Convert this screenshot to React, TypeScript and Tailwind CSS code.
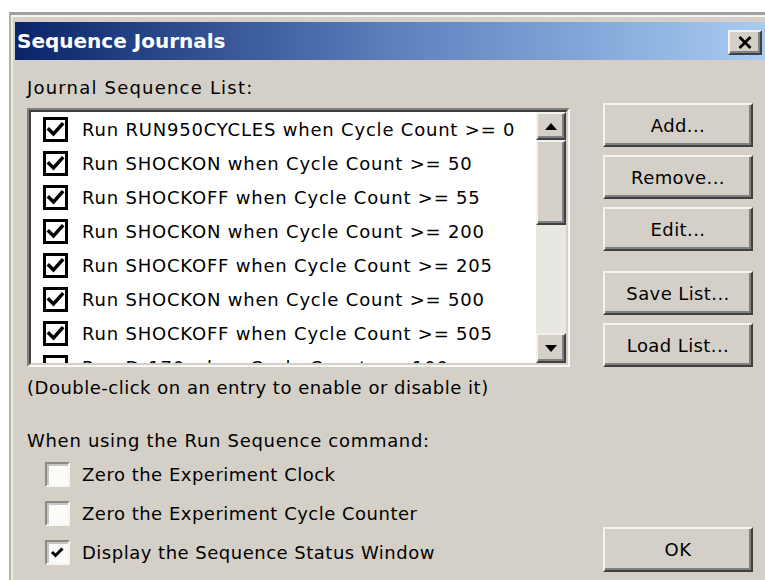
import { ReactNode } from "react"

const font = { fontFamily: '"DejaVu Sans", Verdana, sans-serif' }

const journals = [
  { name: "RUN950CYCLES", count: 0, on: true },
  { name: "SHOCKON", count: 50, on: true },
  { name: "SHOCKOFF", count: 55, on: true },
  { name: "SHOCKON", count: 200, on: true },
  { name: "SHOCKOFF", count: 205, on: true },
  { name: "SHOCKON", count: 500, on: true },
  { name: "SHOCKOFF", count: 505, on: true },
  { name: "Dr170", count: 100, on: false },
]

function ListCheck({ checked }: { checked: boolean }) {
  return (
    <svg width="25" height="25" viewBox="0 0 25 25" className="shrink-0">
      <rect x="1.5" y="1.5" width="22" height="22" fill="#fff" stroke="#000" strokeWidth="3" />
      {checked && (
        <path d="M6 12.5 L10.5 17 L19 7.5" fill="none" stroke="#000" strokeWidth="3.5" strokeLinecap="square" />
      )}
    </svg>
  )
}

function Raised({ className, children }: { className?: string; children?: ReactNode }) {
  return (
    <div
      className={`flex items-center justify-center bg-[#d4d0c8] border-2 border-t-[#f4f2ee] border-l-[#f4f2ee] border-b-[#404040] border-r-[#404040] shadow-[inset_-2px_-2px_0_#808080] ${className ?? ""}`}
    >
      {children}
    </div>
  )
}

function DialogButton({ label, tall }: { label: string; tall?: boolean }) {
  return (
    <Raised className={`${tall ? "h-[45px]" : "h-[44px]"} w-[150px] text-[18px] tracking-[0.4px] text-black`}>
      <span>{label}</span>
    </Raised>
  )
}

function OptionCheck({ label, checked }: { label: string; checked: boolean }) {
  return (
    <div className="flex h-[39px] items-center pl-[18px]">
      <div className="flex h-[25px] w-[25px] shrink-0 items-center justify-center border-2 border-t-[#8c8a86] border-l-[#8c8a86] border-b-[#f6f5f2] border-r-[#f6f5f2] bg-[#fbfbfa] shadow-[inset_2px_2px_0_#c8c6c2]">
        {checked && (
          <svg width="17" height="17" viewBox="0 0 17 17">
            <path d="M3 8 L6.5 11.5 L13.5 4.5" fill="none" stroke="#000" strokeWidth="3" />
          </svg>
        )}
      </div>
      <span className="ml-[12px]">{label}</span>
    </div>
  )
}

export default function App() {
  return (
    <div className="h-[580px] w-[765px] overflow-hidden bg-white pl-[9px] pt-[12px]" style={font}>
      <div className="h-full border-l-2 border-t-[3px] border-l-[#b4b0ac] border-t-[#a29ea2] bg-[#d4d0c8]">
        <div className="flex h-full flex-col border-l-2 border-t-2 border-l-[#eceae6] border-t-[#f6f5f3] pl-[2px] pt-[5px]">
          {/* caption */}
          <div className="flex h-[38px] shrink-0 items-center justify-between bg-gradient-to-r from-[#0a246a] via-[#5d7fbd] to-[#a8ccf2] pl-[2px]">
            <span className="text-[20px] font-bold text-white">Sequence Journals</span>
            <Raised className="mr-[3px] mt-[3px] h-[25px] w-[34px]">
              <svg width="14" height="13" viewBox="0 0 14 13">
                <path d="M1.5 1 L12.5 12 M12.5 1 L1.5 12" stroke="#000" strokeWidth="2.8" />
              </svg>
            </Raised>
          </div>

          {/* body */}
          <div className="flex flex-1 pb-[10px] pl-[12px] text-[18px] tracking-[0.5px] text-black">
            <div className="flex w-[543px] flex-col">
              <div className="mt-[17px] h-[22px] leading-[22px] tracking-[1.2px]">Journal Sequence List:</div>

              <div className="mt-[9px] h-[259px] border-2 border-t-[#808080] border-l-[#808080] border-b-[#f8f8f6] border-r-[#f8f8f6]">
                <div className="flex h-full border-2 border-t-[#404040] border-l-[#404040] border-b-[#d4d0c8] border-r-[#d4d0c8] bg-white">
                  <div className="flex-1 overflow-hidden">
                    {journals.map((j, i) => (
                      <div key={i} className="flex h-[34px] items-center pl-[12px] whitespace-nowrap tracking-[0.8px]">
                        <ListCheck checked={j.on} />
                        <span className="ml-[14px]">
                          Run {j.name} when Cycle Count &gt;= {j.count}
                        </span>
                      </div>
                    ))}
                  </div>

                  {/* vertical scroll bar */}
                  <div className="flex w-[30px] flex-col bg-[#e9e7e2]">
                    <Raised className="h-[28px] w-full">
                      <svg width="12" height="7" viewBox="0 0 12 7">
                        <path d="M6 0 L12 7 L0 7 Z" fill="#000" />
                      </svg>
                    </Raised>
                    <Raised className="h-[85px] w-full" />
                    <div className="flex-1" />
                    <Raised className="h-[30px] w-full">
                      <svg width="12" height="7" viewBox="0 0 12 7">
                        <path d="M0 0 L12 0 L6 7 Z" fill="#000" />
                      </svg>
                    </Raised>
                  </div>
                </div>
              </div>

              <div className="mt-[10px] h-[22px] leading-[22px]">
                (Double-click on an entry to enable or disable it)
              </div>
              <div className="mt-[31px] h-[22px] leading-[22px] tracking-[0.7px]">When using the Run Sequence command:</div>
              <div className="mt-[3px]">
                <OptionCheck label="Zero the Experiment Clock" checked={false} />
                <OptionCheck label="Zero the Experiment Cycle Counter" checked={false} />
                <OptionCheck label="Display the Sequence Status Window" checked />
              </div>
            </div>

            <div className="ml-[33px] flex flex-col pt-[43px]">
              <div className="flex flex-col gap-[8px]">
                <DialogButton label="Add..." />
                <DialogButton label="Remove..." />
                <DialogButton label="Edit..." />
              </div>
              <div className="mt-[20px] flex flex-col gap-[8px]">
                <DialogButton label="Save List..." />
                <DialogButton label="Load List..." />
              </div>
              <div className="mt-auto">
                <DialogButton label="OK" tall />
              </div>
            </div>
          </div>
        </div>
      </div>
    </div>
  )
}
